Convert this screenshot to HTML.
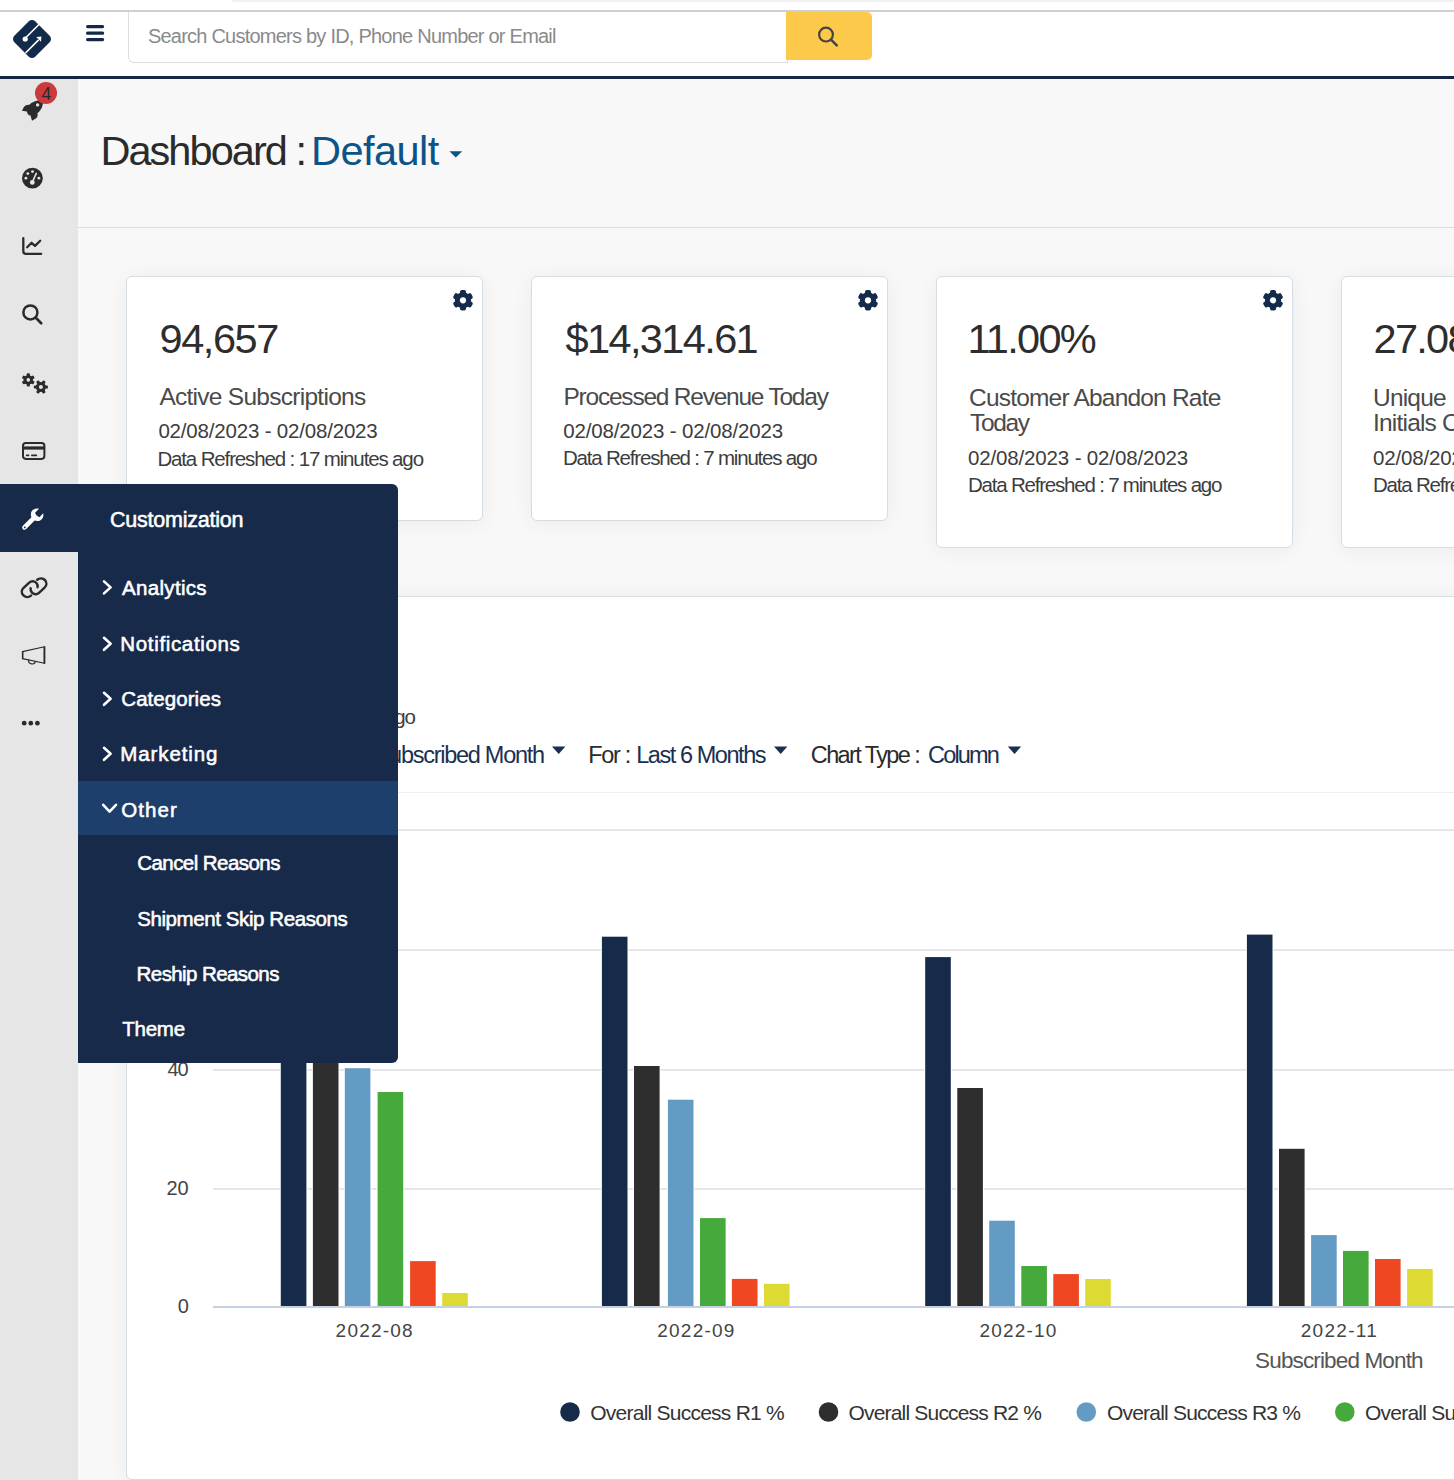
<!DOCTYPE html><html><head><meta charset="utf-8"><title>Dashboard : Default</title><style>
*{box-sizing:border-box;margin:0;padding:0}
html,body{width:1454px;height:1480px;overflow:hidden;background:#f8f8f8;font-family:"Liberation Sans",sans-serif;color:#2d2d2d}
.a{position:absolute}
.t{position:absolute;white-space:nowrap;line-height:1}
svg{position:absolute;overflow:visible}
#topstrip{left:0;top:0;width:1454px;height:10px;background:#fff;overflow:hidden}
#topbar{left:230px;top:-8px;width:1400px;height:10px;background:#eff1f4;border-radius:8px}
#header{left:0;top:10px;width:1454px;height:69px;background:#fff;border-top:2px solid #cfd0d2;border-bottom:3px solid #142845}
#search{left:128px;top:12px;width:660px;height:51px;background:#fff;border:1px solid #dedede;border-top:none;border-radius:0 0 0 6px}
#sbtn{left:786px;top:12px;width:86px;height:48px;background:#fdc94a;border-radius:0 5px 5px 0}
#sidebar{left:0;top:79px;width:78px;height:1401px;background:#e6e6e6}
#pagehead{left:78px;top:79px;width:1376px;height:149px;background:#f8f8f8;border-bottom:1px solid #dedede}
.card{position:absolute;background:#fff;border:1.5px solid #d3dde3;border-radius:6px;box-shadow:0 2px 22px rgba(0,0,0,0.055)}
#flyout{left:0;top:484px;width:398px;height:68px;background:#172a49;border-radius:0 6px 0 0}
#flysub{left:78px;top:552px;width:320px;height:511px;background:#172a49;border-radius:0 0 6px 0}
#flyhi{left:78px;top:781px;width:320px;height:54px;background:#1e3f6b}
</style></head><body>
<div id="topstrip" class="a"><div id="topbar" class="a"></div></div>
<div id="header" class="a"></div>
<svg class="a" style="left:0;top:0" width="120" height="79" viewBox="0 0 120 79">
<rect x="17.25" y="24.25" width="29.5" height="29.5" rx="4.5" fill="#132b4b" transform="rotate(45 32 39)"/>
<path d="M39.2 24.2 L25.2 38.2" stroke="#fff" stroke-width="1.6"/>
<circle cx="25.2" cy="39" r="2.6" fill="#fff"/>
<path d="M25.5 53 L38.6 39.9" stroke="#fff" stroke-width="1.6"/>
<path d="M36.2 37 L41.4 36.6 L41 41.8 Z" fill="#fff"/>
<g stroke="#14284a" stroke-width="3.2" stroke-linecap="round"><path d="M87.6 26.6H102.6M87.6 33.2H102.6M87.6 39.6H102.6"/></g>
</svg>
<div id="search" class="a"></div><div id="sbtn" class="a"></div>
<svg class="a" style="left:0;top:0" width="900" height="79" viewBox="0 0 900 79">
<circle cx="826" cy="34.6" r="6.9" fill="none" stroke="#444" stroke-width="2.2"/>
<path d="M831.2 39.8 L836.8 45.4" stroke="#444" stroke-width="2.5" stroke-linecap="round"/>
</svg>
<div id="sidebar" class="a"></div>
<div id="pagehead" class="a"></div>
<svg class="a" style="left:0;top:0" width="78" height="760" viewBox="0 0 78 760">
<g fill="#2b2b2b">
<path d="M22 110.8 C23.3 107.6 24.6 105.8 26 105.2 L29.8 104.5 C32.2 102.4 35.6 100.4 41.8 100.1 Q43.1 100 43.1 101.3 C43 106 41.5 109.5 38.9 111.9 L37.4 113.2 C37.9 115 37.6 117 36.2 118.2 L32 120.7 L31 117.3 L30.6 115.6 C29 115.8 27.4 114.8 26.9 111.6 Z"/></g>
<circle cx="37.6" cy="104.9" r="1.7" fill="#e6e6e6"/>
<circle cx="46" cy="93" r="11" fill="#cd3a3e"/>
<circle cx="32.4" cy="178.2" r="10.4" fill="#2b2b2b"/>
<g fill="#e6e6e6"><circle cx="25.9" cy="178.2" r="1.4"/><circle cx="27.8" cy="173.6" r="1.4"/><circle cx="32.5" cy="171.6" r="1.4"/><circle cx="38.9" cy="178.2" r="1.4"/><circle cx="32.3" cy="182.4" r="2.4"/></g>
<path d="M32.6 181.5 L36.3 173.4" stroke="#e6e6e6" stroke-width="1.6" stroke-linecap="round"/>
<g fill="none" stroke="#2b2b2b" stroke-width="2.3" stroke-linecap="round" stroke-linejoin="round">
<path d="M23.3 238.2 V251.2 Q23.3 253.8 25.9 253.8 H41.2"/>
<path d="M27.2 247.2 L31.6 242.8 L35 245.9 L40.2 240.7"/>
<circle cx="30.4" cy="312.4" r="7" stroke-width="2.5"/>
<path d="M35.8 317.8 L41.2 323.2" stroke-width="2.7"/>
<rect x="23" y="442.9" width="21.4" height="16" rx="2.8" stroke-width="2"/>
<path d="M26.6 455.4 H28.6 M31.8 455.4 H36.4" stroke-width="1.6"/>
</g>
<rect x="23" y="446.4" width="21.4" height="3.2" fill="#2b2b2b"/>

<g fill="#2b2b2b"><circle cx="28.3" cy="379.9" r="4.752"/><rect x="26.7" y="373.29999999999995" width="3.2" height="13.2" rx="0.9" transform="rotate(0 28.3 379.9)"/><rect x="26.7" y="373.29999999999995" width="3.2" height="13.2" rx="0.9" transform="rotate(60 28.3 379.9)"/><rect x="26.7" y="373.29999999999995" width="3.2" height="13.2" rx="0.9" transform="rotate(120 28.3 379.9)"/></g><circle cx="28.3" cy="379.9" r="1.8" fill="#e6e6e6"/>
<g fill="#2b2b2b"><circle cx="40.9" cy="387.0" r="5.04"/><rect x="39.3" y="380.0" width="3.2" height="14.0" rx="0.9" transform="rotate(30 40.9 387.0)"/><rect x="39.3" y="380.0" width="3.2" height="14.0" rx="0.9" transform="rotate(90 40.9 387.0)"/><rect x="39.3" y="380.0" width="3.2" height="14.0" rx="0.9" transform="rotate(150 40.9 387.0)"/></g><circle cx="40.9" cy="387.0" r="2.0" fill="#e6e6e6"/>
<g fill="none" stroke="#2b2b2b" stroke-width="2.5" stroke-linecap="round" transform="translate(-0.4 1)">
<path d="M31.4 594.6 C29 596.6 25.6 596.4 23.6 594.2 C21.6 592 21.8 588.8 24 586.8 L29.6 581.6 C31.8 579.6 35 579.8 36.8 582 C37.8 583.2 38.2 584.6 38 586.2"/>
<path d="M37.6 578.8 C40 576.8 43.4 577 45.4 579.2 C47.4 581.4 47.2 584.6 45 586.6 L39.4 591.8 C37.2 593.8 34 593.6 32.2 591.4 C31.2 590.2 30.8 588.8 31 587.2"/>
</g>
<g fill="none" stroke="#2b2b2b" stroke-width="1.15" stroke-linejoin="round">
<path d="M22.5 651.6 L44.5 646.8 V663.2 L22.5 658.6 Z"/>
<path d="M28.7 659.7 A3.45 3.45 0 0 0 35.5 661.2"/>
</g>
<path d="M22.7 651.2 V659.2" stroke="#2b2b2b" stroke-width="1.5"/><path d="M44.4 646.4 V663.8" stroke="#2b2b2b" stroke-width="1.8"/>
<g fill="#2b2b2b"><circle cx="24.2" cy="723.2" r="2.35"/><circle cx="30.8" cy="723.2" r="2.35"/><circle cx="37.4" cy="723.2" r="2.35"/></g>
</svg>
<div class="t" style="left:41.5px;top:85.6px;font-size:17.5px;color:#2a2a2a">4</div>
<svg class="a" style="left:0;top:0" width="480" height="240" viewBox="0 0 480 240"><path d="M449.4 151.2 H462.2 L455.8 157.6 Z" fill="#0c5487"/></svg>
<div class="card" style="left:126px;top:276px;width:357px;height:245px"></div>
<div class="card" style="left:531px;top:276px;width:357px;height:245px"></div>
<div class="card" style="left:936px;top:276px;width:357px;height:272px"></div>
<div class="card" style="left:1341px;top:276px;width:357px;height:272px"></div>
<svg class="a" style="left:0;top:0" width="1454" height="600" viewBox="0 0 1454 600"><g fill="#152b4b"><circle cx="463" cy="300.3" r="8.034"/><rect x="460.0" y="290.0" width="6.0" height="20.6" rx="1.8" transform="rotate(0 463 300.3)"/><rect x="460.0" y="290.0" width="6.0" height="20.6" rx="1.8" transform="rotate(60 463 300.3)"/><rect x="460.0" y="290.0" width="6.0" height="20.6" rx="1.8" transform="rotate(120 463 300.3)"/></g><circle cx="463" cy="300.3" r="3.1" fill="#fff"/><g fill="#152b4b"><circle cx="868" cy="300.3" r="8.034"/><rect x="865.0" y="290.0" width="6.0" height="20.6" rx="1.8" transform="rotate(0 868 300.3)"/><rect x="865.0" y="290.0" width="6.0" height="20.6" rx="1.8" transform="rotate(60 868 300.3)"/><rect x="865.0" y="290.0" width="6.0" height="20.6" rx="1.8" transform="rotate(120 868 300.3)"/></g><circle cx="868" cy="300.3" r="3.1" fill="#fff"/><g fill="#152b4b"><circle cx="1273" cy="300.3" r="8.034"/><rect x="1270.0" y="290.0" width="6.0" height="20.6" rx="1.8" transform="rotate(0 1273 300.3)"/><rect x="1270.0" y="290.0" width="6.0" height="20.6" rx="1.8" transform="rotate(60 1273 300.3)"/><rect x="1270.0" y="290.0" width="6.0" height="20.6" rx="1.8" transform="rotate(120 1273 300.3)"/></g><circle cx="1273" cy="300.3" r="3.1" fill="#fff"/></svg>
<div class="card" style="left:126px;top:596px;width:1400px;height:884px"></div>
<div class="a" style="left:127px;top:792px;width:1327px;height:1px;background:#eceef1"></div>
<svg class="a" style="left:0;top:0" width="1454" height="1480" viewBox="0 0 1454 1480"><rect x="213" y="829.2" width="1300" height="1.8" fill="#e3e3e3"/><rect x="213" y="949.2" width="1300" height="1.8" fill="#e3e3e3"/><rect x="213" y="1069" width="1300" height="1.8" fill="#e3e3e3"/><rect x="213" y="1188" width="1300" height="1.8" fill="#e3e3e3"/><rect x="279.80" y="879.00" width="27.6" height="428.00" fill="#fff"/><rect x="280.80" y="880.00" width="25.6" height="426.50" fill="#162b49"/><rect x="311.90" y="1029.00" width="27.6" height="278.00" fill="#fff"/><rect x="312.90" y="1030.00" width="25.6" height="276.50" fill="#2e2e2e"/><rect x="343.80" y="1067.20" width="27.6" height="239.80" fill="#fff"/><rect x="344.80" y="1068.20" width="25.6" height="238.30" fill="#649bc4"/><rect x="376.60" y="1091.00" width="27.6" height="216.00" fill="#fff"/><rect x="377.60" y="1092.00" width="25.6" height="214.50" fill="#46a93b"/><rect x="409.10" y="1260.10" width="27.6" height="46.90" fill="#fff"/><rect x="410.10" y="1261.10" width="25.6" height="45.40" fill="#ee4722"/><rect x="441.20" y="1292.00" width="27.6" height="15.00" fill="#fff"/><rect x="442.20" y="1293.00" width="25.6" height="13.50" fill="#dddb33"/><rect x="600.90" y="935.70" width="27.6" height="371.30" fill="#fff"/><rect x="601.90" y="936.70" width="25.6" height="369.80" fill="#162b49"/><rect x="633.00" y="1065.00" width="27.6" height="242.00" fill="#fff"/><rect x="634.00" y="1066.00" width="25.6" height="240.50" fill="#2e2e2e"/><rect x="666.90" y="1098.70" width="27.6" height="208.30" fill="#fff"/><rect x="667.90" y="1099.70" width="25.6" height="206.80" fill="#649bc4"/><rect x="699.00" y="1217.10" width="27.6" height="89.90" fill="#fff"/><rect x="700.00" y="1218.10" width="25.6" height="88.40" fill="#46a93b"/><rect x="730.90" y="1277.90" width="27.6" height="29.10" fill="#fff"/><rect x="731.90" y="1278.90" width="25.6" height="27.60" fill="#ee4722"/><rect x="763.00" y="1282.80" width="27.6" height="24.20" fill="#fff"/><rect x="764.00" y="1283.80" width="25.6" height="22.70" fill="#dddb33"/><rect x="924.20" y="956.10" width="27.6" height="350.90" fill="#fff"/><rect x="925.20" y="957.10" width="25.6" height="349.40" fill="#162b49"/><rect x="956.30" y="1087.00" width="27.6" height="220.00" fill="#fff"/><rect x="957.30" y="1088.00" width="25.6" height="218.50" fill="#2e2e2e"/><rect x="988.20" y="1219.70" width="27.6" height="87.30" fill="#fff"/><rect x="989.20" y="1220.70" width="25.6" height="85.80" fill="#649bc4"/><rect x="1020.30" y="1265.00" width="27.6" height="42.00" fill="#fff"/><rect x="1021.30" y="1266.00" width="25.6" height="40.50" fill="#46a93b"/><rect x="1052.30" y="1273.10" width="27.6" height="33.90" fill="#fff"/><rect x="1053.30" y="1274.10" width="25.6" height="32.40" fill="#ee4722"/><rect x="1084.20" y="1278.00" width="27.6" height="29.00" fill="#fff"/><rect x="1085.20" y="1279.00" width="25.6" height="27.50" fill="#dddb33"/><rect x="1245.90" y="933.60" width="27.6" height="373.40" fill="#fff"/><rect x="1246.90" y="934.60" width="25.6" height="371.90" fill="#162b49"/><rect x="1278.00" y="1147.80" width="27.6" height="159.20" fill="#fff"/><rect x="1279.00" y="1148.80" width="25.6" height="157.70" fill="#2e2e2e"/><rect x="1310.10" y="1234.10" width="27.6" height="72.90" fill="#fff"/><rect x="1311.10" y="1235.10" width="25.6" height="71.40" fill="#649bc4"/><rect x="1342.00" y="1249.90" width="27.6" height="57.10" fill="#fff"/><rect x="1343.00" y="1250.90" width="25.6" height="55.60" fill="#46a93b"/><rect x="1374.00" y="1258.00" width="27.6" height="49.00" fill="#fff"/><rect x="1375.00" y="1259.00" width="25.6" height="47.50" fill="#ee4722"/><rect x="1406.10" y="1267.90" width="27.6" height="39.10" fill="#fff"/><rect x="1407.10" y="1268.90" width="25.6" height="37.60" fill="#dddb33"/><rect x="213" y="1306" width="1300" height="2" fill="#c6d1e3"/><circle cx="570" cy="1412" r="9.8" fill="#162b49"/><circle cx="828.5" cy="1412" r="9.8" fill="#2e2e2e"/><circle cx="1086.3" cy="1412" r="9.8" fill="#649bc4"/><circle cx="1344.8" cy="1412" r="9.8" fill="#46a93b"/><path d="M552 746.6 H565.4 L558.7 754 Z" fill="#1a3050"/><path d="M774 746.6 H787.4 L780.7 754 Z" fill="#1a3050"/><path d="M1007.8 746.6 H1021.1999999999999 L1014.5 754 Z" fill="#1a3050"/></svg>
<div class="t" style="left:147.9px;top:25.8px;font-size:20.0px;letter-spacing:-0.768px;color:#8a8a8a;">Search Customers by ID, Phone Number or Email</div>
<div class="t" style="left:100.4px;top:130.0px;font-size:41.5px;letter-spacing:-1.94px;color:#2b2b2b;">Dashboard :</div>
<div class="t" style="left:311.0px;top:130.0px;font-size:41.5px;letter-spacing:-0.55px;color:#0c5487;">Default</div>
<div class="t" style="left:159.6px;top:318.0px;font-size:41.5px;letter-spacing:-1.46px;color:#2d2d2d;">94,657</div>
<div class="t" style="left:159.4px;top:385.0px;font-size:24.5px;letter-spacing:-0.726px;color:#4a4a4a;">Active Subscriptions</div>
<div class="t" style="left:158.4px;top:420.8px;font-size:20.5px;letter-spacing:-0.186px;color:#3d3d3d;">02/08/2023 - 02/08/2023</div>
<div class="t" style="left:157.4px;top:448.9px;font-size:20.5px;letter-spacing:-1.14px;color:#3d3d3d;">Data Refreshed : 17 minutes ago</div>
<div class="t" style="left:565.5px;top:318.3px;font-size:41.5px;letter-spacing:-1.611px;color:#2d2d2d;">$14,314.61</div>
<div class="t" style="left:563.5px;top:384.9px;font-size:24.5px;letter-spacing:-1.227px;color:#4a4a4a;">Processed Revenue Today</div>
<div class="t" style="left:563.3px;top:420.5px;font-size:20.5px;letter-spacing:-0.164px;color:#3d3d3d;">02/08/2023 - 02/08/2023</div>
<div class="t" style="left:563.0px;top:448.1px;font-size:20.5px;letter-spacing:-1.2px;color:#3d3d3d;">Data Refreshed : 7 minutes ago</div>
<div class="t" style="left:967.5px;top:318.4px;font-size:41.5px;letter-spacing:-1.7px;color:#2d2d2d;">11.00%</div>
<div class="t" style="left:969.0px;top:385.6px;font-size:24.5px;letter-spacing:-0.8px;color:#4a4a4a;">Customer Abandon Rate</div>
<div class="t" style="left:970.0px;top:410.7px;font-size:24.5px;letter-spacing:-1.375px;color:#4a4a4a;">Today</div>
<div class="t" style="left:968.0px;top:448.0px;font-size:20.5px;letter-spacing:-0.15px;color:#3d3d3d;">02/08/2023 - 02/08/2023</div>
<div class="t" style="left:968.0px;top:475.4px;font-size:20.5px;letter-spacing:-1.207px;color:#3d3d3d;">Data Refreshed : 7 minutes ago</div>
<div class="t" style="left:1373.5px;top:318.4px;font-size:41.5px;letter-spacing:-1.7px;color:#2d2d2d;">27.08%</div>
<div class="t" style="left:1373.0px;top:385.6px;font-size:24.5px;letter-spacing:-0.8px;color:#4a4a4a;">Unique</div>
<div class="t" style="left:1373.0px;top:410.7px;font-size:24.5px;letter-spacing:-0.8px;color:#4a4a4a;">Initials Count</div>
<div class="t" style="left:1373.0px;top:448.0px;font-size:20.5px;letter-spacing:-0.15px;color:#3d3d3d;">02/08/2023 - 02/08/2023</div>
<div class="t" style="left:1373.0px;top:475.4px;font-size:20.5px;letter-spacing:-1.207px;color:#3d3d3d;">Data Refreshed : 7 minutes ago</div>
<div class="t" style="left:161.4px;top:707.0px;font-size:20.5px;letter-spacing:-1.207px;color:#3d3d3d;">Data Refreshed : 7 minutes ago</div>
<div class="t" style="left:261.0px;top:743.6px;font-size:23.5px;letter-spacing:-1.3px;color:#2b2b2b;">Group By :</div>
<div class="t" style="left:374.7px;top:743.6px;font-size:23.5px;letter-spacing:-1.267px;color:#1a3050;">Subscribed Month</div>
<div class="t" style="left:588.2px;top:743.6px;font-size:23.5px;letter-spacing:-1.275px;color:#2b2b2b;">For :</div>
<div class="t" style="left:636.2px;top:743.6px;font-size:23.5px;letter-spacing:-1.433px;color:#1a3050;">Last 6 Months</div>
<div class="t" style="left:810.8px;top:744.1px;font-size:23.5px;letter-spacing:-1.609px;color:#2b2b2b;">Chart Type :</div>
<div class="t" style="left:928.1px;top:744.1px;font-size:23.5px;letter-spacing:-1.84px;color:#1a3050;">Column</div>
<div class="t" style="left:166.6px;top:1177.5px;font-size:20.0px;letter-spacing:-0.1px;color:#444;">20</div>
<div class="t" style="left:177.7px;top:1296.3px;font-size:20.0px;letter-spacing:0.0px;color:#444;">0</div>
<div class="t" style="left:167.6px;top:1059.1px;font-size:20.0px;letter-spacing:-1.1px;color:#444;">40</div>
<div class="t" style="left:166.6px;top:939.0px;font-size:20.0px;letter-spacing:-0.1px;color:#444;">60</div>
<div class="t" style="left:166.6px;top:819.8px;font-size:20.0px;letter-spacing:-0.1px;color:#444;">80</div>
<div class="t" style="left:335.6px;top:1321.0px;font-size:19.0px;letter-spacing:1.217px;color:#444;">2022-08</div>
<div class="t" style="left:657.3px;top:1321.0px;font-size:19.0px;letter-spacing:1.217px;color:#444;">2022-09</div>
<div class="t" style="left:979.5px;top:1321.0px;font-size:19.0px;letter-spacing:1.2px;color:#444;">2022-10</div>
<div class="t" style="left:1300.7px;top:1321.0px;font-size:19.0px;letter-spacing:1.317px;color:#444;">2022-11</div>
<div class="t" style="left:1255.1px;top:1349.8px;font-size:22.5px;letter-spacing:-0.86px;color:#555;">Subscribed Month</div>
<div class="t" style="left:590.3px;top:1402.0px;font-size:21.0px;letter-spacing:-0.763px;color:#333;">Overall Success R1 %</div>
<div class="t" style="left:848.5px;top:1402.0px;font-size:21.0px;letter-spacing:-0.816px;color:#333;">Overall Success R2 %</div>
<div class="t" style="left:1106.9px;top:1402.0px;font-size:21.0px;letter-spacing:-0.784px;color:#333;">Overall Success R3 %</div>
<div class="t" style="left:1365.0px;top:1402.0px;font-size:21.0px;letter-spacing:-0.763px;color:#333;">Overall Success R4 %</div>
<div id="flyout" class="a"></div><div id="flysub" class="a"></div><div id="flyhi" class="a"></div>
<svg class="a" style="left:0;top:0" width="400" height="1064" viewBox="0 0 400 1064">
<g fill="#ffffff">
<path d="M22.9 525.8 L31.4 517.3 C30.2 513.6 31.2 510.6 33.6 509.4 C35.4 508.4 37.4 508.4 39 508.8 L35 512.8 L36.6 515.6 L39.4 517.2 L43.2 513.2 C43.8 515.6 43.2 517.6 41.8 519.2 C40 521 37.2 521.6 34.6 520.6 L26.2 529 C25.2 530 23.8 530 22.9 529.2 C22 528.2 22 526.8 22.9 525.8 Z"/>
</g>
<circle cx="24.8" cy="527.4" r="0.9" fill="#172a48"/>
<g fill="none" stroke="#ffffff" stroke-width="2.6" stroke-linecap="round" stroke-linejoin="round">
<path d="M104 581.4 L110.6 587.4 L104 593.4"/>
<path d="M104 637.8 L110.6 643.8 L104 649.8"/>
<path d="M104 692.8 L110.6 698.8 L104 704.8"/>
<path d="M104 747.8 L110.6 753.8 L104 759.8"/>
<path d="M103.2 804.8 L109.6 811.6 L116 804.8"/>
</g>
</svg>
<div class="t" style="left:109.9px;top:510.4px;font-size:21.5px;letter-spacing:-0.217px;color:#ffffff;-webkit-text-stroke:0.55px #fff;">Customization</div>
<div class="t" style="left:122.1px;top:577.5px;font-size:20.5px;letter-spacing:0.312px;color:#ffffff;-webkit-text-stroke:0.55px #fff;">Analytics</div>
<div class="t" style="left:120.3px;top:634.0px;font-size:20.5px;letter-spacing:0.658px;color:#ffffff;-webkit-text-stroke:0.55px #fff;">Notifications</div>
<div class="t" style="left:121.3px;top:689.0px;font-size:20.5px;letter-spacing:0.056px;color:#ffffff;-webkit-text-stroke:0.55px #fff;">Categories</div>
<div class="t" style="left:120.3px;top:743.6px;font-size:20.5px;letter-spacing:0.888px;color:#ffffff;-webkit-text-stroke:0.55px #fff;">Marketing</div>
<div class="t" style="left:121.3px;top:799.6px;font-size:20.5px;letter-spacing:1.05px;color:#ffffff;-webkit-text-stroke:0.55px #fff;">Other</div>
<div class="t" style="left:137.2px;top:852.9px;font-size:20.5px;letter-spacing:-0.554px;color:#ffffff;-webkit-text-stroke:0.55px #fff;">Cancel Reasons</div>
<div class="t" style="left:137.2px;top:909.0px;font-size:20.5px;letter-spacing:-0.41px;color:#ffffff;-webkit-text-stroke:0.55px #fff;">Shipment Skip Reasons</div>
<div class="t" style="left:136.6px;top:963.6px;font-size:20.5px;letter-spacing:-0.585px;color:#ffffff;-webkit-text-stroke:0.55px #fff;">Reship Reasons</div>
<div class="t" style="left:122.3px;top:1019.0px;font-size:20.5px;letter-spacing:-0.25px;color:#ffffff;-webkit-text-stroke:0.55px #fff;">Theme</div>
</body></html>
